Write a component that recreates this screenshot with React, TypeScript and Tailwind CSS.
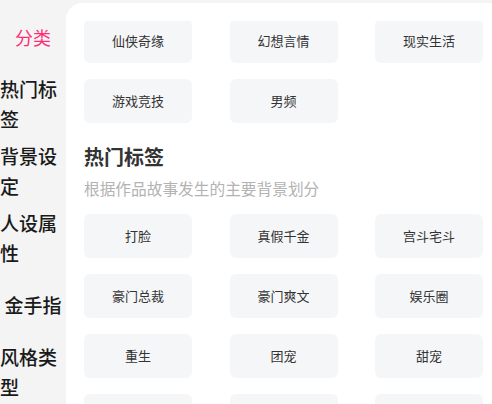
import React from "react";

const font = { fontFamily: '"Noto Sans CJK SC", "Noto Sans", sans-serif' };

const sideItems = ["分类", "热门标签", "背景设定", "人设属性", "金手指", "风格类型"];
const topTags = ["仙侠奇缘", "幻想言情", "现实生活", "游戏竞技", "男频"];
const hotTags = ["打脸", "真假千金", "宫斗宅斗", "豪门总裁", "豪门爽文", "娱乐圈", "重生", "团宠", "甜宠", "", "", ""];

function Tag({ label }: { label: string }) {
  return (
    <div className="h-[44px] w-[108px] rounded-[6px] bg-[#f5f6f8] flex items-center justify-center text-[13px] text-[#333333]">
      {label}
    </div>
  );
}

export default function App() {
  return (
    <div className="w-[492px] h-[404px] overflow-hidden bg-[#f4f4f4] flex" style={font}>
      <div className="w-[66px] shrink-0 pt-[3px] flex flex-col">
        {sideItems.map((s, i) => (
          <div key={s} className="h-[67px] shrink-0 flex items-center justify-center">
            <div
              className={
                i === 0
                  ? "text-[18px] leading-[30px] text-[#ff2d78]"
                  : "text-[19px] leading-[30px] font-medium text-[#1a1a1a]"
              }
            >
              {s}
            </div>
          </div>
        ))}
      </div>
      <div className="flex-1 mt-[3px] bg-white rounded-tl-[16px] pt-[18px] overflow-hidden">
        <div className="h-full overflow-hidden">
          <div className="-mt-[2px] pl-[18px]">
            <div className="grid grid-cols-[108px_108px_108px] gap-x-[37.5px] gap-y-[16px]">
              {topTags.map((t) => (
                <Tag key={t} label={t} />
              ))}
            </div>
            <div className="mt-[20px] text-[20px] leading-[28px] font-bold text-[#333333]">热门标签</div>
            <div className="mt-[7px] text-[15.7px] leading-[22px] text-[#b3b3b3]">根据作品故事发生的主要背景划分</div>
            <div className="mt-[14px] grid grid-cols-[108px_108px_108px] gap-x-[37.5px] gap-y-[16px]">
              {hotTags.map((t, i) => (
                <Tag key={i} label={t} />
              ))}
            </div>
          </div>
        </div>
      </div>
    </div>
  );
}
